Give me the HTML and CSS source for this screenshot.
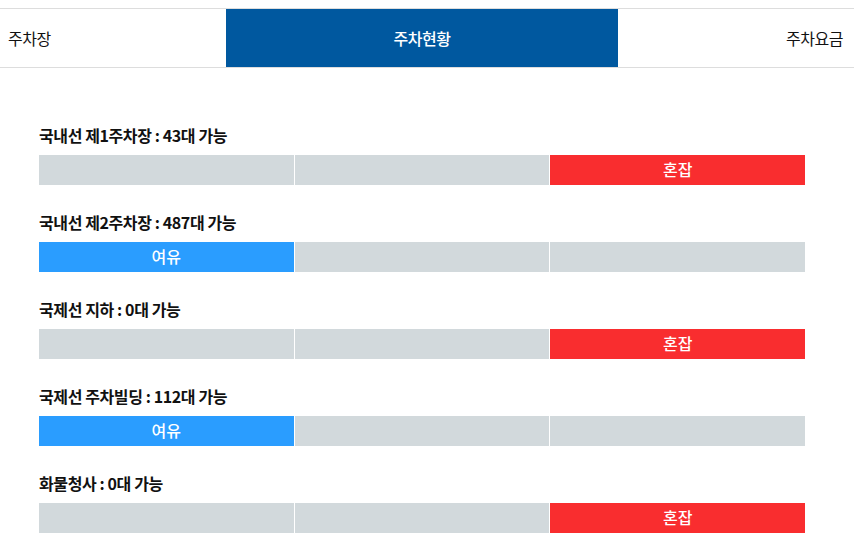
FILE: index.html
```html
<!DOCTYPE html>
<html>
<head>
<meta charset="utf-8">
<link rel="stylesheet" href="styles.css">
</head>
<body>

<div class="tabs">
  <div class="tab tab-left">주차장</div>
  <div class="tab tab-on">주차현황</div>
  <div class="tab tab-right">주차요금</div>
</div>

<div class="list">
  <div class="lot">
    <div class="name">국내선 제1주차장 : 43대 가능</div>
    <div class="bar">
      <div class="seg"></div>
      <div class="seg"></div>
      <div class="seg busy">혼잡</div>
    </div>
  </div>

  <div class="lot">
    <div class="name">국내선 제2주차장 : 487대 가능</div>
    <div class="bar">
      <div class="seg free">여유</div>
      <div class="seg"></div>
      <div class="seg"></div>
    </div>
  </div>

  <div class="lot">
    <div class="name">국제선 지하 : 0대 가능</div>
    <div class="bar">
      <div class="seg"></div>
      <div class="seg"></div>
      <div class="seg busy">혼잡</div>
    </div>
  </div>

  <div class="lot">
    <div class="name">국제선 주차빌딩 : 112대 가능</div>
    <div class="bar">
      <div class="seg free">여유</div>
      <div class="seg"></div>
      <div class="seg"></div>
    </div>
  </div>

  <div class="lot">
    <div class="name">화물청사 : 0대 가능</div>
    <div class="bar">
      <div class="seg"></div>
      <div class="seg"></div>
      <div class="seg busy">혼잡</div>
    </div>
  </div>
</div>

</body>
</html>
```

FILE: styles.css
```css
body {
  font-family: "Noto Sans CJK KR", "Noto Sans", sans-serif;
  margin: 0;
  padding: 0;
  background-color: #fff;
  color: #111;
}

.tabs {
  display: flex;
  margin-top: 8px;
  border-top: 1px solid #ddd;
  border-bottom: 1px solid #ddd;
  height: 58px;
}

.tab {
  display: flex;
  align-items: center;
  font-size: 16px;
  letter-spacing: -0.5px;
}

.tab-left {
  width: 226px;
  padding-left: 8px;
  box-sizing: border-box;
}

.tab-on {
  width: 392px;
  justify-content: center;
  background-color: #00589f;
  color: #fff;
  font-weight: 500;
}

.tab-right {
  flex: 1;
  justify-content: flex-end;
  padding-right: 11px;
}

.list {
  padding: 30px 49px 0 39px;
}

.lot {
  padding-top: 27px;
}

.name {
  font-size: 16px;
  font-weight: 700;
  letter-spacing: -0.4px;
  line-height: 21px;
  margin-bottom: 9px;
}

.bar {
  display: flex;
  gap: 1px;
  height: 30px;
}

.seg {
  flex: 1;
  background-color: #d2d9dc;
  color: #fff;
  font-size: 16px;
  font-weight: 500;
  display: flex;
  align-items: center;
  justify-content: center;
  padding-bottom: 2px;
  box-sizing: border-box;
}

.busy {
  background-color: #f92d2f;
}

.free {
  background-color: #2a9dff;
}
```
